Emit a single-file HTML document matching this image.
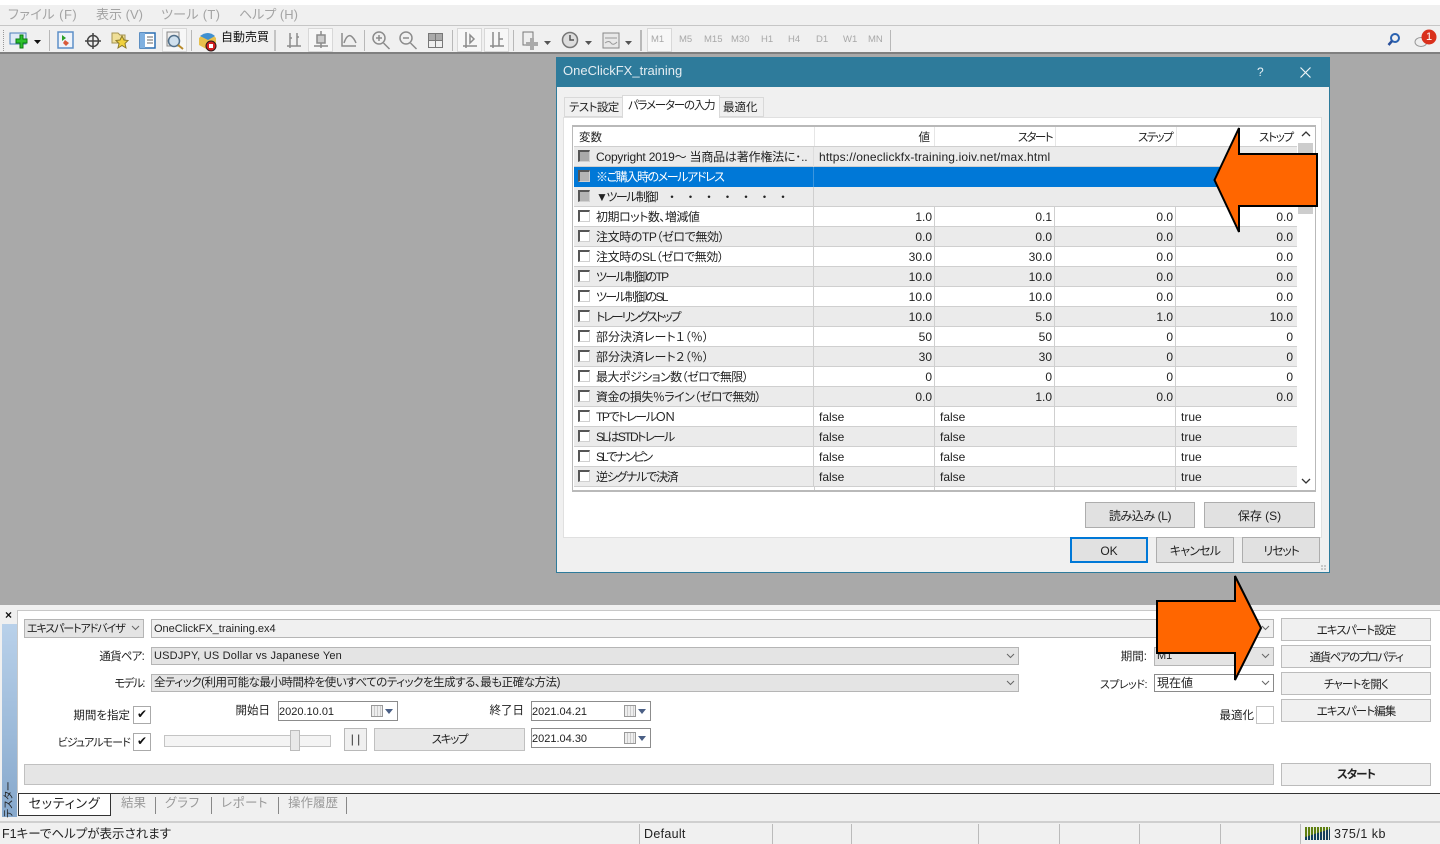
<!DOCTYPE html>
<html lang="ja"><head><meta charset="utf-8"><title>OneClickFX_training</title>
<style>
html,body{margin:0;padding:0;width:1440px;height:844px;overflow:hidden;background:#fff}
body{position:relative;font:12px/20px "Liberation Sans","Noto Sans CJK JP",sans-serif;color:#222;font-feature-settings:"palt"}
div{position:absolute;box-sizing:border-box;white-space:nowrap}
.m{color:#a4a4a4;font-size:13px;top:5px}
.tf{color:#a8a8a8;font-size:9.5px;top:30px}
.sep{top:30px;width:1px;height:21px;background:#b8b8b8}
.r{left:574px;width:723px;height:20px;border-bottom:1px solid #cfcfcf;background:#fff}
.g{background:#ebebeb}
.cb{left:4px;top:3px;width:12px;height:12px;background:#fff;border:1px solid #d0d0d0;border-top:2px solid #555;border-left:2px solid #555}
.cb.d{background:#b4b4b4}
.t{left:22px;top:0}
.c{top:0;height:20px;border-left:1px solid #cfcfcf;padding:0 2px 0 3px;text-align:right;line-height:21px}
.c1{left:239px;width:121px}.c2{left:360px;width:120px}.c3{left:480px;width:121px}.c4{left:601px;width:122px;padding-right:4px}
.c.l{text-align:left;padding-left:5px}
.h{top:128px;text-align:right;font-size:11.5px}
.btn{background:#e1e1e1;border:1px solid #adadad;text-align:center;line-height:25px;height:26px}
.btn2{background:#f0f0f0;border:1px solid #bcbcbc;text-align:center;line-height:25px;font-size:11.5px;left:1281px;width:150px;height:23px}
.cmb{border:1px solid #b5b5b5;background:#e4e4e4;padding-left:2px;font-size:11px;line-height:18px;height:20px}
.cmb svg{position:absolute;right:3px;top:5px}
.lb{font-size:11.5px;text-align:right}
.chk{width:18px;height:18px;border:1px solid #aaa;background:#fff;font-size:12px;line-height:14px;text-align:center;color:#111}
.dt{border:1px solid #8c8c8c;background:#fff;height:20px;font-size:11px;line-height:20px;padding-left:0;width:120px}
.cal{position:absolute;left:92px;top:3px;width:12px;height:12px;background:repeating-linear-gradient(90deg,#eee 0 2px,#ccc 2px 3px);border:1px solid #999}
.car{position:absolute;left:106px;top:7px;border:4px solid transparent;border-top:5px solid #4a5f85;border-bottom:0}
.tb{color:#9a9a9a;font-size:12.5px;top:793px}
.tsp{top:797px;width:1px;height:17px;background:#888}
.st{top:824px;width:1px;height:20px;background:#bbb}
.hl{top:28px;height:24px;background:#f7f7f7;border:1px solid #d8d8d8}
svg{position:absolute;overflow:visible}
</style></head><body>

<div style="left:0;top:5px;width:1440px;height:48px;background:#f0f0f0"></div>
<div style="left:0;top:25px;width:1440px;height:1px;background:#c6c6c6"></div>
<div style="left:0;top:52px;width:1440px;height:2px;background:#7f7f7f"></div>
<div style="left:0;top:54px;width:1440px;height:552px;background:#a9a9a9"></div>

<div class="m" style="left:8px;letter-spacing:.5px">ファイル (F)</div>
<div class="m" style="left:96px">表示 (V)</div>
<div class="m" style="left:161px;letter-spacing:.3px">ツール (T)</div>
<div class="m" style="left:239px">ヘルプ (H)</div>

<!-- toolbar -->
<div class="hl" style="left:162px;width:25px"></div>
<div class="hl" style="left:308px;width:25px"></div>
<div class="hl" style="left:457px;width:25px"></div>
<div class="hl" style="left:484px;width:25px"></div>
<div class="hl" style="left:647px;width:25px"></div>
<div class="sep" style="left:3px;border-left:1px dotted #999;background:none"></div>
<div class="sep" style="left:49px"></div>
<div class="sep" style="left:191px"></div>
<div class="sep" style="left:274px;width:2px;background:#c4c4c4"></div>
<div class="sep" style="left:364px"></div>
<div class="sep" style="left:452px"></div>
<div class="sep" style="left:513px"></div>
<div class="sep" style="left:640px;width:2px"></div>
<div class="sep" style="left:890px"></div>

<svg style="left:0;top:26px" width="900" height="26" viewBox="0 0 900 26">
<rect x="10" y="7" width="16" height="11" fill="#dfe9f7" stroke="#4d7fb8"/><path d="M20 9v4h-4v4h4v5h3v-5h4v-4h-4V9z" fill="#2cc02c" stroke="#0c7a12"/><path d="M34 14h7l-3.500 4z" fill="#111"/>
<rect x="58" y="6" width="15" height="16" fill="#eef3fa" stroke="#5d8fc8" stroke-width="1.500"/><path d="M62 9l4 3-4 3z" fill="#2aa02a"/><path d="M65 14l4 3-3 3-3-3z" fill="#d85a3a"/>
<circle cx="93" cy="15" r="5.500" fill="none" stroke="#444" stroke-width="1.500"/><path d="M93 7v16M85 15h16" stroke="#444" stroke-width="1.500"/>
<path d="M112 7h6l2 2h5v8h-13z" fill="#efdf98" stroke="#a49352"/><path d="M122 10l2 4 4 .5-3 3 1 4.500-4-2.500-4 2.500 1-4.500-3-3 4-.5z" fill="#f1d23e" stroke="#8b7a2a"/>
<rect x="140" y="7" width="15" height="15" fill="#fff" stroke="#2c6fb2" stroke-width="1.500"/><rect x="140" y="7" width="5" height="15" fill="#7fb0e0"/><path d="M147 11h6M147 14h6M147 17h6" stroke="#666"/>
<rect x="167" y="6" width="12" height="14" fill="#eee" stroke="#888"/><circle cx="174" cy="15" r="5.500" fill="#cfe0ee" stroke="#52708a" stroke-width="1.500"/><path d="M178 19l5 4" stroke="#b88a2a" stroke-width="2"/>
<path d="M199 12q9-8 17 0v6l-8 6-9-5z" fill="#e8c04c"/><path d="M200 10q8-6 15 0l-7 4z" fill="#3f8fd0"/><circle cx="211" cy="20" r="5" fill="#d32020" stroke="#2a1a1a"/><rect x="209" y="18" width="4" height="4" fill="#fff"/>
<g fill="none" stroke="#8c8c8c" stroke-width="1.500"><path d="M287 20h14M290 7v15M297 7v13M292 12h-2M297 11h2"/>
<path d="M314 20h14M321 5v17"/><rect x="317" y="9" width="8" height="8" fill="#ccc"/>
<path d="M342 7v13h14M344 17q3-9 7-7 3 2 5 7"/>
<circle cx="379" cy="12" r="6"/><path d="M376 12h6M379 9v6M383.500 17l6 6" /><circle cx="406" cy="12" r="6"/><path d="M403 12h6M410.500 17l6 6"/>
<path d="M463 20h14M466 6v16M470 9v8l4-4z"/><path d="M490 20h14M493 6v16M499 6v14M499 13h4"/>
<circle cx="570" cy="14" r="7.500" fill="#ddd" stroke="#777"/><path d="M570 9v5h4" stroke="#555"/>
</g>
<path d="M428 7h15v15h-15z" fill="#777"/><path d="M429 8h6v6h-6zM436 8h6v6h-6z" fill="#aaa"/><path d="M429 15h6v6h-6zM436 15h6v6h-6z" fill="#eee"/>
<rect x="523" y="6" width="10" height="13" fill="#eee" stroke="#777"/><path d="M530 12h4v4h4v4h-4v4h-4v-4h-4v-4h4z" fill="#aaa"/><path d="M544 15h7l-3.500 4zM585 15h7l-3.500 4zM625 15h7l-3.500 4z" fill="#555"/>
<rect x="603" y="7" width="16" height="15" fill="#e8e8e8" stroke="#888"/><path d="M605 12h12M605 17q4-3 6 0t6-1" stroke="#999" fill="none"/>
<circle cx="1395" cy="12" r="4" fill="none" stroke="#2a62b0" stroke-width="2"/><path d="M1392 15l-3.500 4" stroke="#2a4f9a" stroke-width="2.500"/>
<ellipse cx="1421" cy="16" rx="6" ry="4.500" fill="#eee" stroke="#999"/>
<circle cx="1429" cy="11" r="7.500" fill="#d9301c"/>
</svg>
<div style="left:1425px;top:27px;width:8px;color:#fff;font-size:11px;text-align:center">1</div>
<div style="left:221px;top:27px;font-size:12px;color:#111">自動売買</div>
<div class="tf" style="left:651px">M1</div><div class="tf" style="left:679px">M5</div><div class="tf" style="left:704px">M15</div><div class="tf" style="left:731px">M30</div><div class="tf" style="left:761px">H1</div><div class="tf" style="left:788px">H4</div><div class="tf" style="left:816px">D1</div><div class="tf" style="left:843px">W1</div><div class="tf" style="left:868px">MN</div>

<!-- dialog -->
<div style="left:556px;top:57px;width:774px;height:516px;background:#f0f0f0;border:1px solid #2e7b9b"></div>
<div style="left:556px;top:57px;width:774px;height:30px;background:#2e7b9b"></div>
<div style="left:563px;top:61px;color:#e4edf2;font-size:13px">OneClickFX_training</div>
<div style="left:1257px;top:62px;color:#e8f0f4;font-size:12px">?</div>
<svg style="left:1300px;top:67px" width="11" height="11"><path d="M.5.500l10 10M10.500.500l-10 10" stroke="#eef4f7" stroke-width="1.200"/></svg>

<div style="left:563px;top:117px;width:759px;height:421px;background:#fff;border:1px solid #e0e0e0"></div>
<div style="left:564px;top:97px;width:59px;height:20px;background:#f0f0f0;border:1px solid #d9d9d9;font-size:11.5px;line-height:20px;padding-left:4px;letter-spacing:-.6px">テスト設定</div>
<div style="left:622px;top:95px;width:98px;height:23px;background:#fff;border:1px solid #d9d9d9;border-bottom:0;font-size:11.5px;line-height:21px;padding-left:5px;letter-spacing:-1.200px">パラメーターの入力</div>
<div style="left:719px;top:97px;width:45px;height:20px;background:#f0f0f0;border:1px solid #d9d9d9;font-size:11.5px;line-height:20px;padding-left:3px">最適化</div>

<div style="left:572px;top:125px;width:744px;height:367px;background:#fff;border:2px solid #b9b9b9;border-right-width:1px;border-left-width:1px"></div>
<div class="h" style="left:579px">変数</div>
<div class="h" style="left:900px;width:30px">値</div>
<div class="h" style="left:1000px;width:52px;letter-spacing:-1.600px">スタート</div>
<div class="h" style="left:1120px;width:52px;letter-spacing:-1.600px">ステップ</div>
<div class="h" style="left:1241px;width:52px;letter-spacing:-1.200px">ストップ</div>
<div style="left:574px;top:146px;width:723px;height:1px;background:#cfcfcf"></div>
<div style="left:814px;top:127px;width:1px;height:19px;background:#e6e6e6"></div><div style="left:934px;top:127px;width:1px;height:19px;background:#e6e6e6"></div><div style="left:1055px;top:127px;width:1px;height:19px;background:#e6e6e6"></div><div style="left:1176px;top:127px;width:1px;height:19px;background:#e6e6e6"></div>

<div class="r g" style="top:147px"><div class="cb d" style="background:#a9a9a9"></div><div class="t" style="letter-spacing:-.2px">Copyright 2019～ 当商品は著作権法に･..</div><div class="c c1 l" style="width:484px;border-left:1px solid #ddd;line-height:20px;letter-spacing:.15px">https://oneclickfx-training.ioiv.net/max.html</div></div>
<div class="r" style="top:167px;background:#0078d7;border:0"><div class="cb d"></div><div class="t" style="color:#fff;letter-spacing:-1.400px">※ご購入時のメールアドレス</div><div class="c c1" style="border-color:#3c96de;width:1px;padding:0"></div></div>
<div class="r g" style="top:187px"><div class="cb d"></div><div class="t" style="letter-spacing:-1.500px">▼ツール制御</div><div style="left:92px;top:0;letter-spacing:6.500px;font-feature-settings:normal">・・・・・・・</div><div class="c c1" style="width:1px;padding:0"></div></div>
<div class="r" style="top:207px"><div class="cb"></div><div class="t" style="letter-spacing:-.5px">初期ロット数、増減値</div><div class="c c1">1.0</div><div class="c c2">0.1</div><div class="c c3">0.0</div><div class="c c4">0.0</div></div>
<div class="r g" style="top:227px"><div class="cb"></div><div class="t" style="letter-spacing:-.4px">注文時のTP（ゼロで無効）</div><div class="c c1">0.0</div><div class="c c2">0.0</div><div class="c c3">0.0</div><div class="c c4">0.0</div></div>
<div class="r" style="top:247px"><div class="cb"></div><div class="t" style="letter-spacing:-.4px">注文時のSL（ゼロで無効）</div><div class="c c1">30.0</div><div class="c c2">30.0</div><div class="c c3">0.0</div><div class="c c4">0.0</div></div>
<div class="r g" style="top:267px"><div class="cb"></div><div class="t" style="letter-spacing:-1.700px">ツール制御のTP</div><div class="c c1">10.0</div><div class="c c2">10.0</div><div class="c c3">0.0</div><div class="c c4">0.0</div></div>
<div class="r" style="top:287px"><div class="cb"></div><div class="t" style="letter-spacing:-1.700px">ツール制御のSL</div><div class="c c1">10.0</div><div class="c c2">10.0</div><div class="c c3">0.0</div><div class="c c4">0.0</div></div>
<div class="r g" style="top:307px"><div class="cb"></div><div class="t" style="letter-spacing:-2px">トレーリングストップ</div><div class="c c1">10.0</div><div class="c c2">5.0</div><div class="c c3">1.0</div><div class="c c4">10.0</div></div>
<div class="r" style="top:327px"><div class="cb"></div><div class="t">部分決済レート１（％）</div><div class="c c1">50</div><div class="c c2">50</div><div class="c c3">0</div><div class="c c4">0</div></div>
<div class="r g" style="top:347px"><div class="cb"></div><div class="t">部分決済レート２（％）</div><div class="c c1">30</div><div class="c c2">30</div><div class="c c3">0</div><div class="c c4">0</div></div>
<div class="r" style="top:367px"><div class="cb"></div><div class="t" style="letter-spacing:-.55px">最大ポジション数（ゼロで無限）</div><div class="c c1">0</div><div class="c c2">0</div><div class="c c3">0</div><div class="c c4">0</div></div>
<div class="r g" style="top:387px"><div class="cb"></div><div class="t" style="letter-spacing:-.55px">資金の損失％ライン（ゼロで無効）</div><div class="c c1">0.0</div><div class="c c2">1.0</div><div class="c c3">0.0</div><div class="c c4">0.0</div></div>
<div class="r" style="top:407px"><div class="cb"></div><div class="t" style="letter-spacing:-1.400px">TPでトレールＯＮ</div><div class="c c1 l">false</div><div class="c c2 l">false</div><div class="c c3"></div><div class="c c4 l">true</div></div>
<div class="r g" style="top:427px"><div class="cb"></div><div class="t" style="letter-spacing:-1.600px">SLはSTDトレール</div><div class="c c1 l">false</div><div class="c c2 l">false</div><div class="c c3"></div><div class="c c4 l">true</div></div>
<div class="r" style="top:447px"><div class="cb"></div><div class="t" style="letter-spacing:-2.100px">SLでナンピン</div><div class="c c1 l">false</div><div class="c c2 l">false</div><div class="c c3"></div><div class="c c4 l">true</div></div>
<div class="r g" style="top:467px"><div class="cb"></div><div class="t" style="letter-spacing:-1.300px">逆シグナルで決済</div><div class="c c1 l">false</div><div class="c c2 l">false</div><div class="c c3"></div><div class="c c4 l">true</div></div>
<div style="left:814px;top:487px;width:1px;height:3px;background:#cfcfcf"></div><div style="left:934px;top:487px;width:1px;height:3px;background:#cfcfcf"></div><div style="left:1054px;top:487px;width:1px;height:3px;background:#cfcfcf"></div><div style="left:1175px;top:487px;width:1px;height:3px;background:#cfcfcf"></div>

<div style="left:1298px;top:143px;width:15px;height:71px;background:#cdcdcd"></div>
<svg style="left:1301px;top:131px" width="10" height="7"><path d="M1 5l4-4 4 4" fill="none" stroke="#333" stroke-width="1.300"/></svg>
<svg style="left:1301px;top:478px" width="10" height="7"><path d="M1 1l4 4 4-4" fill="none" stroke="#333" stroke-width="1.300"/></svg>

<div class="btn" style="left:1085px;top:502px;width:110px;line-height:26px;letter-spacing:-.4px">読み込み (L)</div>
<div class="btn" style="left:1204px;top:502px;width:111px;line-height:26px">保存 (S)</div>
<div class="btn" style="left:1070px;top:537px;width:78px;border:2px solid #0078d7;line-height:25px">OK</div>
<div class="btn" style="left:1156px;top:537px;width:78px;line-height:26px;letter-spacing:-.8px">キャンセル</div>
<div class="btn" style="left:1242px;top:537px;width:78px;line-height:26px;letter-spacing:-1.200px">リセット</div>
<svg style="left:1321px;top:565px" width="6" height="6"><path d="M0 0h2v2H0zM3 0h2v2H3zM0 3h2v2H0zM3 3h2v2H3z" fill="#c8c8c8"/></svg>

<!-- bottom panel -->
<div style="left:0;top:605px;width:1440px;height:239px;background:#f0f0f0"></div>
<div style="left:17px;top:610px;width:1423px;height:183px;background:#fff;border-top:1px solid #c8c8c8;border-left:1px solid #c8c8c8"></div>
<div style="left:5px;top:609px;font-size:12px;line-height:12px;color:#111;font-weight:bold">×</div>
<div style="left:2px;top:624px;width:15px;height:193px;background:linear-gradient(#b9d1ea,#86a8cc)"></div>
<div style="left:-10px;top:791px;width:40px;height:14px;transform:rotate(-90deg);font-size:10px;line-height:14px;color:#222;text-align:left">テスター</div>

<div class="cmb" style="left:24px;top:619px;width:120px;height:19px;padding-left:2px;letter-spacing:-1.100px;overflow:hidden">エキスパートアドバイザ<svg width="9" height="6"><path d="M1 1l3.500 3.500L8 1" fill="none" stroke="#666"/></svg></div>
<div class="cmb" style="left:151px;top:619px;width:1123px;height:19px;background:#f0f0f0">OneClickFX_training.ex4<svg width="9" height="6"><path d="M1 1l3.500 3.500L8 1" fill="none" stroke="#666"/></svg></div>
<div class="lb" style="left:60px;top:647px;width:84px;letter-spacing:-.8px">通貨ペア:</div>
<div class="cmb" style="left:151px;top:647px;width:868px;height:18px;line-height:17px;letter-spacing:.2px">USDJPY, US Dollar vs Japanese Yen<svg width="9" height="6"><path d="M1 1l3.500 3.500L8 1" fill="none" stroke="#666"/></svg></div>
<div class="lb" style="left:60px;top:674px;width:84px;letter-spacing:-1.500px">モデル:</div>
<div class="cmb" style="left:151px;top:674px;width:868px;height:18px;line-height:17px;font-size:11.5px;letter-spacing:-.47px">全ティック(利用可能な最小時間枠を使いすべてのティックを生成する、最も正確な方法)<svg width="9" height="6"><path d="M1 1l3.500 3.500L8 1" fill="none" stroke="#666"/></svg></div>

<div class="lb" style="left:50px;top:706px;width:80px">期間を指定</div>
<div class="chk" style="left:133px;top:706px">✔</div>
<div class="lb" style="left:40px;top:733px;width:90px;font-size:11px;letter-spacing:-.9px">ビジュアルモード</div>
<div class="chk" style="left:133px;top:733px">✔</div>
<div class="lb" style="left:220px;top:701px;width:50px">開始日</div>
<div class="dt" style="left:278px;top:701px">2020.10.01<div class="cal"></div><div class="car"></div></div>
<div class="lb" style="left:474px;top:701px;width:50px">終了日</div>
<div class="dt" style="left:531px;top:701px">2021.04.21<div class="cal"></div><div class="car"></div></div>
<div class="dt" style="left:531px;top:728px">2021.04.30<div class="cal"></div><div class="car"></div></div>

<div style="left:164px;top:735px;width:167px;height:12px;background:#f4f4f4;border:1px solid #c4c4c4"></div>
<div style="left:290px;top:730px;width:10px;height:21px;background:#e8e8e8;border:1px solid #bbb"></div>
<div style="left:344px;top:728px;width:23px;height:23px;background:#f0f0f0;border:1px solid #b8b8b8;text-align:center;line-height:20px;font-size:12px;color:#333">| |</div>
<div style="left:374px;top:728px;width:151px;height:23px;background:#e8e8e8;border:1px solid #c0c0c0;text-align:center;font-size:11.5px;line-height:23px;letter-spacing:-1.300px">スキップ</div>

<div class="lb" style="left:1100px;top:647px;width:47px">期間:</div>
<div class="cmb" style="left:1154px;top:647px;width:120px;height:19px;background:#e4e4e4;line-height:17px">M1<svg width="9" height="6"><path d="M1 1l3.500 3.500L8 1" fill="none" stroke="#666"/></svg></div>
<div class="lb" style="left:1080px;top:675px;width:67px;font-size:11px;letter-spacing:-.5px">スプレッド:</div>
<div class="cmb" style="left:1154px;top:674px;width:120px;height:18px;background:#fff;border-color:#8a8a8a;font-size:12px;line-height:16px">現在値<svg width="9" height="6"><path d="M1 1l3.500 3.500L8 1" fill="none" stroke="#666"/></svg></div>
<div class="lb" style="left:1205px;top:706px;width:49px">最適化</div>
<div class="chk" style="left:1256px;top:706px;border-color:#c4c4c4"></div>

<div class="btn2" style="top:618px;letter-spacing:-.9px">エキスパート設定</div>
<div class="btn2" style="top:645px;letter-spacing:-1.500px">通貨ペアのプロパティ</div>
<div class="btn2" style="top:672px;letter-spacing:-.8px">チャートを開く</div>
<div class="btn2" style="top:699px;letter-spacing:-.9px">エキスパート編集</div>
<div class="btn2" style="top:763px;font-weight:bold;line-height:23px;letter-spacing:-1px">スタート</div>
<div style="left:24px;top:764px;width:1250px;height:21px;background:#e5e5e5;border:1px solid #c0c0c0"></div>

<div style="left:110px;top:793px;width:1330px;height:1px;background:#333"></div>
<div style="left:18px;top:793px;width:93px;height:23px;background:#fff;border:1px solid #333;font-size:13px;text-align:center;line-height:20px;color:#222;letter-spacing:.8px">セッティング</div>
<div class="tb" style="left:121px">結果</div><div class="tsp" style="left:155px"></div>
<div class="tb" style="left:165px;letter-spacing:.8px">グラフ</div><div class="tsp" style="left:211px"></div>
<div class="tb" style="left:221px;letter-spacing:.5px">レポート</div><div class="tsp" style="left:278px"></div>
<div class="tb" style="left:288px">操作履歴</div><div class="tsp" style="left:346px"></div>

<div style="left:0;top:821px;width:1440px;height:2px;background:#cfcfcf"></div>
<div style="left:2px;top:824px;font-size:12.5px;color:#222">F1キーでヘルプが表示されます</div>
<div class="st" style="left:639px"></div>
<div style="left:644px;top:824px;font-size:12.5px;letter-spacing:.3px">Default</div>
<div class="st" style="left:772px"></div><div class="st" style="left:851px"></div><div class="st" style="left:978px"></div><div class="st" style="left:1059px"></div><div class="st" style="left:1139px"></div><div class="st" style="left:1220px"></div><div class="st" style="left:1300px"></div>
<div style="left:1305px;top:827px;width:25px;height:13px;background:repeating-linear-gradient(90deg,#5f7f10 0 2px,#dfe8d0 2px 3px)"></div>
<svg style="left:1305px;top:827px" width="25" height="13"><path d="M0 13V10L25 2V13z" fill="#123f5c"/><path d="M2.500 0v13M5.500 0v13M8.500 0v13M11.500 0v13M14.500 0v13M17.500 0v13M20.500 0v13M23.500 0v13" stroke="#e6ede0"/></svg>
<div style="left:1334px;top:824px;font-size:12.5px;letter-spacing:.5px">375/1 kb</div>

<!-- arrows -->
<svg style="left:0;top:0" width="1440" height="844"><path d="M1214.500 180L1239 128V154H1317V206H1239V232z" fill="#f60" stroke="#000" stroke-width="2"/><path d="M1157 601H1235V576L1261 628L1235 680V653H1157z" fill="#f60" stroke="#000" stroke-width="2"/></svg>
</body></html>
